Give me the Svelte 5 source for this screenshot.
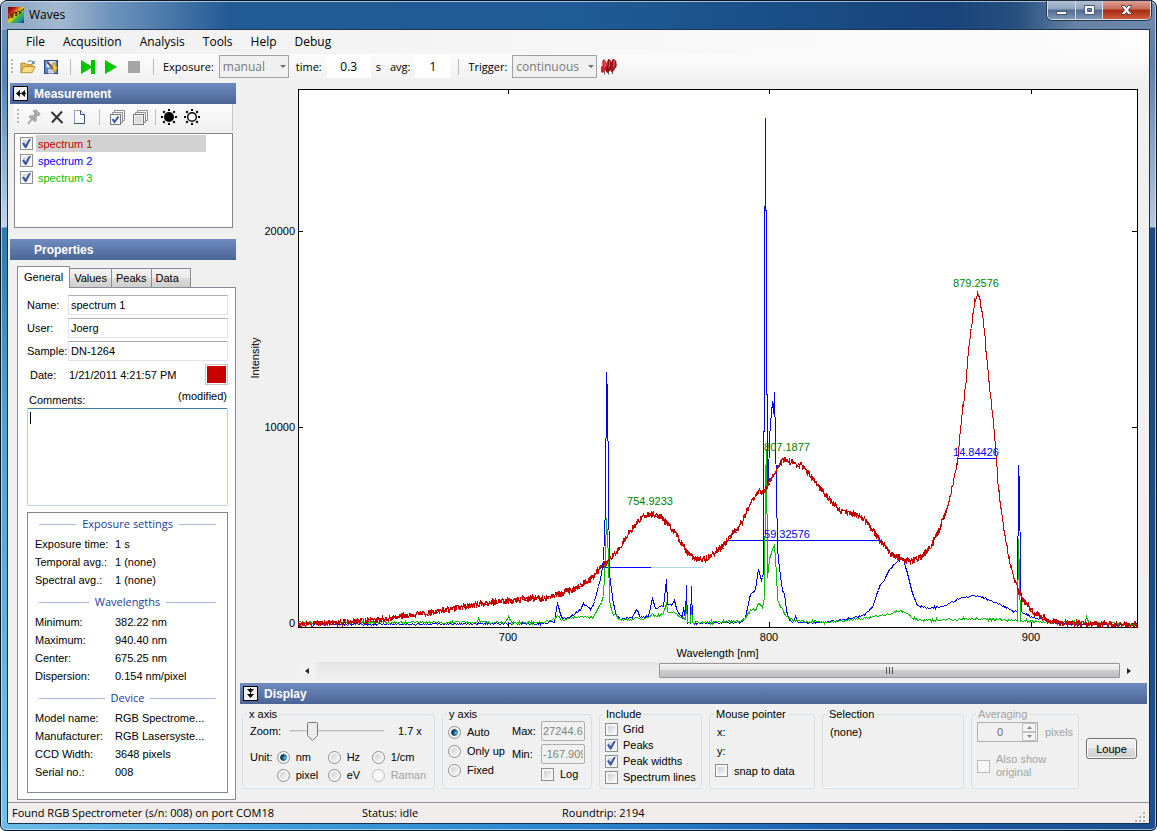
<!-- App.svelte -->
<script>
    // Menus and tabs
    const menus = ['File', 'Acqusition', 'Analysis', 'Tools', 'Help', 'Debug'];
    const tabs = ['General', 'Values', 'Peaks', 'Data'];

    // State
    let activeTab = $state('General');
    let selected = $state(0);
    let comments = $state('');
    let zoom = $state(20);
    let unit = $state('nm');
    let yMode = $state('Auto');
    let spectra = $state([
        { name: 'spectrum 1', color: '#c80000', visible: true },
        { name: 'spectrum 2', color: '#0000ff', visible: true },
        { name: 'spectrum 3', color: '#00c000', visible: true }
    ]);
    let include = $state([
        { label: 'Grid', on: false },
        { label: 'Peaks', on: true },
        { label: 'Peak widths', on: true },
        { label: 'Spectrum lines', on: false }
    ]);

    const units = [
        { label: 'nm' }, { label: 'Hz' }, { label: '1/cm' },
        { label: 'pixel' }, { label: 'eV' }, { label: 'Raman', disabled: true }
    ];

    const info = [
        { title: 'Exposure settings', rows: [
            ['Exposure time:', '1 s'],
            ['Temporal avg.:', '1 (none)'],
            ['Spectral avg.:', '1 (none)']
        ] },
        { title: 'Wavelengths', rows: [
            ['Minimum:', '382.22 nm'],
            ['Maximum:', '940.40 nm'],
            ['Center:', '675.25 nm'],
            ['Dispersion:', '0.154 nm/pixel']
        ] },
        { title: 'Device', rows: [
            ['Model name:', 'RGB Spectrome...'],
            ['Manufacturer:', 'RGB Lasersyste...'],
            ['CCD Width:', '3648 pixels'],
            ['Serial no.:', '008']
        ] }
    ];

    const VIEW = { x0: 298, x1: 1137, y0: 89, y1: 627 };
    const red = [
        [298,624],[340,622],[370,620],[400,616],[430,612],[460,607],[490,602],[520,599],[545,597],[560,594],
        [575,588],[590,579],[600,568],[606,563],[615,553],[625,538],[635,524],[642,517],[652,513],[660,516],
        [668,524],[675,532],[682,545],[688,553],[695,558],[705,559],[715,552],[725,543],[735,530],[742,521],
        [750,503],[757,491],[762,492],[766,488],[770,480],[776,470],[780,462],[785,459],[790,461],[795,465],
        [802,466],[810,475],[820,488],[830,500],[840,510],[850,513],[862,517],[870,526],[880,540],[890,553],
        [900,558],[910,561],[920,557],[930,547],[937,533],[943,518],[948,505],[953,480],[957,460],[960,427],
        [965,387],[968,347],[972,320],[974,302],[977,294],[978,294],[982,312],[985,343],[988,377],[992,413],
        [995,447],[998,487],[1002,520],[1007,550],[1012,573],[1017,588],[1023,600],[1033,612],[1047,619],
        [1060,623],[1137,624]
    ];
    const blue = [
        [298,623],[350,624],[540,623],[554,621],[557,603],[561,617],[567,618],[575,613],[580,609],[583,604],
        [590,608],[593,605],[597,590],[600,578],[603,560],[605,507],[606,372],[607,393],[608,483],[609,573],
        [612,597],[615,613],[620,619],[632,617],[636,609],[640,617],[648,616],[652,598],[655,608],[663,605],
        [666,580],[667,603],[671,605],[674,600],[677,611],[682,617],[683,607],[685,618],[686,584],[687,623],
        [690,623],[691,586],[692,623],[740,622],[745,617],[750,593],[755,590],[758,568],[761,580],[763,573],
        [764,300],[765,119],[766,300],[767,487],[768,480],[769,436],[770,423],[772,400],[773,413],[774,392],
        [776,487],[777,547],[778,560],[782,590],[784,593],[786,610],[789,620],[793,622],[795,616],[797,622],
        [823,622],[840,620],[863,615],[872,607],[880,583],[883,581],[890,568],[900,559],[903,559],[907,573],
        [912,593],[917,605],[928,608],[943,606],[957,599],[973,595],[983,597],[997,603],[1013,611],[1017,611],
        [1018,465],[1019,487],[1020,573],[1021,612],[1033,617],[1043,619],[1057,623],[1137,624]
    ];
    const green = [
        [298,622],[350,622],[355,619],[360,622],[476,622],[478,619],[480,622],[505,622],[508,617],[511,622],
        [540,622],[554,619],[557,615],[561,619],[583,616],[593,617],[598,607],[603,597],[605,553],[606,517],
        [608,557],[609,600],[612,613],[620,619],[632,619],[636,616],[640,619],[648,618],[652,612],[655,616],
        [663,613],[666,602],[667,612],[674,611],[680,617],[685,619],[686,605],[687,622],[690,622],[691,607],
        [692,622],[740,621],[745,618],[750,610],[755,609],[758,602],[762,607],[764,597],[765,480],[766,450],
        [767,577],[769,560],[772,548],[774,545],[776,573],[777,600],[785,615],[793,620],[823,622],[857,619],
        [877,616],[900,610],[905,612],[912,618],[923,620],[977,618],[1013,620],[1017,620],[1018,540],
        [1019,577],[1020,620],[1057,622],[1085,622],[1086,615],[1088,622],[1137,624]
    ];

    const peaks = [
        { x: 650, y: 501, text: '754.9233' },
        { x: 787, y: 447, text: '807.1877' },
        { x: 976, y: 283, text: '879.2576' }
    ];
    const widths = [
        { x0: 651, x1: 703, y: 567, color: '#add8e6' },
        { x0: 602, x1: 651, y: 567, color: '#0000ff' },
        { x0: 726, x1: 882, y: 540, color: '#0000ff', text: '59.32576', mid: 787, ty: 534 },
        { x0: 957, x1: 996, y: 458, color: '#0000ff', text: '14.84426', mid: 976, ty: 452 }
    ];
    const xTicks = [[508, '700'], [769, '800'], [1031, '900']];
    const yTicks = [[231, '20000'], [427, '10000'], [623, '0']];

    // Plot geometry
    let chartW = $state(907);
    let chartH = $state(583);
    const pad = { left: 58, top: 10, right: 10, bottom: 35 };
    let plotW = $derived(chartW - pad.left - pad.right);
    let plotH = $derived(chartH - pad.top - pad.bottom);

    function sx(x) {
        return pad.left + (x - VIEW.x0) / (VIEW.x1 - VIEW.x0) * plotW;
    }

    function sy(y) {
        return pad.top + (y - VIEW.y0) / (VIEW.y1 - VIEW.y0) * plotH;
    }

    // Snap to the middle of a pixel so hairlines stay sharp
    function snap(v) {
        return Math.round(v) + 0.5;
    }

    // Small repeatable generator for the detector noise
    function noise(seed) {
        let s = seed;
        return () => {
            s = (s * 1664525 + 1013904223) % 4294967296;
            return s / 4294967296 - 0.5;
        };
    }

    function resample(points, step, amp, seed) {
        const rnd = noise(seed);
        const out = [];
        let i = 0;
        for (let x = points[0][0]; x <= VIEW.x1; x += step) {
            while (i < points.length - 2 && points[i + 1][0] <= x) i++;
            const [ax, ay] = points[i];
            const [bx, by] = points[i + 1];
            out.push([x, Math.min(ay + (by - ay) * (x - ax) / (bx - ax) + rnd() * amp, 626)]);
        }
        return out;
    }

    const traces = [
        { index: 1, points: resample(blue, 1, 1.8, 7) },
        { index: 2, points: resample(green, 1, 2.4, 21) },
        { index: 0, points: resample(red, 0.5, 6, 3) }
    ];

    function toPath(points) {
        return 'M' + points.map(([x, y]) => (sx(x) + 0.5).toFixed(1) + ' ' + snap(sy(y))).join('L');
    }
</script>

{#snippet check(label, on, disabled = false)}
    <label class="option" class:disabled>
        <input type="checkbox" checked={on} {disabled} />
        <span>{label}</span>
    </label>
{/snippet}

{#snippet stack()}
    <path d="M5.5 3.5V1.5H15.5V11.5H13.5" fill="none" stroke="#8d8f91" />
    <path d="M3.5 5.5V3.5H13.5V13.5H11.5" fill="none" stroke="#8d8f91" />
    <rect x="1.5" y="5.5" width="10" height="10" fill="#f4f5f7" stroke="#77797c" />
{/snippet}

{#snippet rays()}
    <path d="M8 0V2M8 14V16M0 8H2M14 8H16M2.2 2.2L3.8 3.8M12.2 12.2L13.8 13.8M13.8 2.2L12.2 3.8M3.8 12.2L2.2 13.8" stroke="#000" stroke-width="2" />
{/snippet}

<div class="window">
    <header class="titlebar">
        <svg class="app-icon" width="16" height="16" viewBox="0 0 16 16">
            <defs>
                <linearGradient id="rainbow" x1="0" y1="0" x2="1" y2="1">
                    <stop offset="0" stop-color="#5a0608" />
                    <stop offset=".25" stop-color="#c41c12" />
                    <stop offset=".48" stop-color="#f0d020" />
                    <stop offset=".62" stop-color="#45b838" />
                    <stop offset=".8" stop-color="#1a9aa0" />
                    <stop offset="1" stop-color="#1c2a78" />
                </linearGradient>
            </defs>
            <rect width="16" height="16" fill="url(#rainbow)" />
            <path d="M0 11C2 11 2 7 4 7C6 7 5 11 4 11C3 11 4 6 7 5.500C10 5 9 9 8 9C7 9 8 5 10 4.500C13 3 13 6.500 12 7C10.500 7 12 3 16 2" fill="none" stroke="#301010" />
        </svg>
        <h1>Waves</h1>
        <div class="window-buttons">
            <button class="min" aria-label="Minimize">
                <svg width="13" height="12" viewBox="0 0 13 12"><rect x="1.5" y="7.500" width="10" height="3" fill="#fff" stroke="#4b5a70" /></svg>
            </button>
            <button class="max" aria-label="Maximize">
                <svg width="13" height="12" viewBox="0 0 13 12"><path d="M1.500 1.500H11.500V10.500H1.500ZM4.500 4.500V7.500H8.500V4.500Z" fill="#fff" fill-rule="evenodd" stroke="#4b5a70" /></svg>
            </button>
            <button class="close" aria-label="Close">
                <svg width="13" height="12" viewBox="0 0 13 12"><path d="M1.500 1.500H4.500L6.500 3.500L8.500 1.500H11.500V2.500L8.500 6L11.500 9.500V10.500H8.500L6.500 8.500L4.500 10.500H1.500V9.500L4.500 6L1.500 2.500Z" fill="#fff" stroke="#53343a" /></svg>
            </button>
        </div>
    </header>

    <div class="client">
        <nav class="menubar">
            {#each menus as menu}
                <button>{menu}</button>
            {/each}
        </nav>

        <div class="toolbar">
            <span class="grip"></span>
            <button class="tool" aria-label="Open">
                <svg width="17" height="16" viewBox="0 0 17 16">
                    <path d="M1 14V4H6L7.500 5.500H13V8" fill="#e9bd54" stroke="#b0832c" />
                    <path d="M1 14L4 7.500H16L13 14Z" fill="#fbdc86" stroke="#b98c34" />
                    <path d="M8 3C9.500 1 12 .8 14 2.800" fill="none" stroke="#4f6a8c" />
                    <path d="M15.500 1V4.500H12Z" fill="#4f6a8c" />
                </svg>
            </button>
            <button class="tool save" aria-label="Save">
                <svg width="16" height="16" viewBox="0 0 16 16">
                    <rect x="1.500" y="1.500" width="13" height="13" fill="#5580cc" stroke="#2c4a86" />
                    <rect x="3.500" y="2" width="9" height="6.500" fill="#e9eef6" />
                    <rect x="5" y="10" width="6" height="4.500" fill="#c6cfdd" />
                    <path d="M4 2.500L12 12" stroke="#5a5a62" stroke-width="2" />
                    <path d="M9 5L11 3L14.500 9L12 14L10 11Z" fill="#f0c040" stroke="#a17c22" stroke-width=".6" />
                </svg>
            </button>
            <span class="separator"></span>
            <button class="tool" aria-label="Single acquisition">
                <svg width="16" height="16" viewBox="0 0 16 16"><path d="M1 1L11 7V1H15V15H11V9L1 15Z" fill="#00c400" /></svg>
            </button>
            <button class="tool play" aria-label="Start">
                <svg width="16" height="16" viewBox="0 0 16 16"><path d="M2 1L14 8L2 15Z" fill="#00c400" /></svg>
            </button>
            <button class="tool play" aria-label="Stop">
                <svg width="16" height="16" viewBox="0 0 16 16"><rect x="2" y="2" width="12" height="12" fill="#a5a5a5" /></svg>
            </button>
            <span class="separator"></span>
            <label class="field" for="exposure">Exposure:</label>
            <span class="combo manual">
                <select id="exposure" disabled><option>manual</option></select>
            </span>
            <label class="field" for="time">time:</label>
            <input id="time" class="time" value="0.3" />
            <span class="field seconds">s</span>
            <label class="field" for="avg">avg:</label>
            <input id="avg" class="avg" value="1" />
            <span class="separator"></span>
            <label class="field" for="trigger">Trigger:</label>
            <span class="combo continuous">
                <select id="trigger" disabled><option>continuous</option></select>
            </span>
            <button class="tool" aria-label="Trigger settings">
                <svg width="16" height="16" viewBox="0 0 16 16">
                    <path d="M3.500 11V15.500M7.500 11V15.500M11.500 11V15" stroke="#555" />
                    <path d="M4.500 2C2 4 6 6 3.500 8C1.500 9 1.500 11 3 12.500" fill="none" stroke="#d4202a" stroke-width="5" />
                    <path d="M9.500 1.500C7 4 11 6 8.500 8C6.500 9 6.500 11 8 12.500" fill="none" stroke="#8e0f16" stroke-width="5" />
                    <path d="M14 1C11 4 15.500 6 12.500 8C11 9 11 11 12.500 12" fill="none" stroke="#a3141c" stroke-width="4.500" />
                    <path d="M4 2.500C3 4 5.500 6 3.500 8.500M9 2C7.500 4 10 6 7.500 8.500M13.500 1.500C12 4 14 6 12 8" fill="none" stroke="#f07a80" />
                </svg>
            </button>
        </div>

        <div class="body">
            <aside>
                <h2 class="section-bar">
                    <button aria-label="Collapse measurement">
                        <svg width="13" height="13" viewBox="0 0 13 13"><path d="M6 3V10L2 6.500ZM11 3V10L7 6.500Z" /><path d="M5 6.500H7M10 6.500H12" stroke="#000" /></svg>
                    </button>
                    Measurement
                </h2>

                <div class="list-tools">
                    <span class="grip"></span>
                    <button class="tool" aria-label="Pin">
                        <svg width="16" height="16" viewBox="0 0 16 16">
                            <path d="M6.500 1.500L10 .5L14.500 4.500L13.500 7L11.500 7L10.500 9C11.500 11 10.500 13 8.500 13L2.500 8C3.500 6 5.500 6 7 6.500L8.500 4.500Z" fill="#a9a9a9" />
                            <path d="M6 10L2 15" stroke="#a9a9a9" stroke-width="2" />
                        </svg>
                    </button>
                    <button class="tool" aria-label="Delete">
                        <svg width="16" height="16" viewBox="0 0 16 16"><path d="M2.500 3L13.500 14M13 2.500L3 13.500" stroke="#333" stroke-width="2" /></svg>
                    </button>
                    <button class="tool" aria-label="New">
                        <svg width="16" height="16" viewBox="0 0 16 16">
                            <path d="M2.500 1.500H8.500L12.500 5.500V14.500H2.500Z" fill="#fff" stroke="#8ea4c2" />
                            <path d="M8.500 1.500V5.500H12.500V14.500H2" fill="none" stroke="#34507c" />
                        </svg>
                    </button>
                    <span class="separator"></span>
                    <button class="tool" aria-label="Check all">
                        <svg width="16" height="16" viewBox="0 0 16 16">
                            {@render stack()}
                            <path d="M3.500 10L5.500 13L9.500 7.500" fill="none" stroke="#3b57a6" stroke-width="2" />
                        </svg>
                    </button>
                    <button class="tool" aria-label="Uncheck all">
                        <svg width="16" height="16" viewBox="0 0 16 16">
                            {@render stack()}
                            <rect x="3" y="7" width="7" height="7" fill="#dcdddf" />
                        </svg>
                    </button>
                    <span class="separator tight"></span>
                    <button class="tool" aria-label="Dark spectrum">
                        <svg width="16" height="16" viewBox="0 0 16 16">{@render rays()}<circle cx="8" cy="8" r="5" /></svg>
                    </button>
                    <button class="tool" aria-label="Reference spectrum">
                        <svg width="16" height="16" viewBox="0 0 16 16">{@render rays()}<circle cx="8" cy="8" r="4.300" fill="#fff" stroke="#000" stroke-width="1.400" /></svg>
                    </button>
                </div>

                <ul class="spectra">
                    {#each spectra as spectrum, i}
                        <li>
                            <input type="checkbox" bind:checked={spectrum.visible} aria-label={spectrum.name} />
                            <button
                                class:selected={selected === i}
                                style="color: {spectrum.color}"
                                onclick={() => selected = i}
                            >{spectrum.name}</button>
                        </li>
                    {/each}
                </ul>

                <h2 class="section-bar plain">Properties</h2>

                <div class="tabs" role="tablist">
                    {#each tabs as tab}
                        <button
                            role="tab"
                            aria-selected={activeTab === tab}
                            class:active={activeTab === tab}
                            onclick={() => activeTab = tab}
                        >{tab}</button>
                    {/each}
                </div>

                <div class="tab-page">
                    <div class="properties">
                        <label for="name">Name:</label>
                        <input id="name" value="spectrum 1" />
                        <label for="user">User:</label>
                        <input id="user" value="Joerg" />
                        <label for="sample">Sample:</label>
                        <input id="sample" value="DN-1264" />
                    </div>
                    <div class="date">
                        <span class="caption">Date:</span>
                        <span>1/21/2011 4:21:57 PM</span>
                        <button class="swatch" aria-label="Spectrum color"></button>
                    </div>
                    <div class="comments-head">
                        <label for="comments">Comments:</label>
                        <span>(modified)</span>
                    </div>
                    <div class="comments">
                        <textarea id="comments" bind:value={comments}></textarea>
                        {#if !comments}<span class="caret"></span>{/if}
                    </div>

                    <div class="info">
                        {#each info as group}
                            <h3>{group.title}</h3>
                            <dl>
                                {#each group.rows as [key, value]}
                                    <dt>{key}</dt>
                                    <dd>{value}</dd>
                                {/each}
                            </dl>
                        {/each}
                    </div>
                </div>
            </aside>

            <main>
                <div class="chart" bind:clientWidth={chartW} bind:clientHeight={chartH}>
                    <svg width={chartW} height={chartH}>
                        <g shape-rendering="crispEdges" fill="none">
                            <rect x={pad.left + 0.5} y={pad.top + 0.5} width={plotW} height={plotH} fill="#fff" stroke="#000" />
                            {#each xTicks as [x]}
                                <path d="M{snap(sx(x))} {pad.top}v5M{snap(sx(x))} {pad.top + plotH}v-5" stroke="#000" />
                            {/each}
                            {#each yTicks as [y]}
                                <path d="M{pad.left} {snap(sy(y))}h5M{pad.left + plotW} {snap(sy(y))}h-5" stroke="#000" />
                            {/each}
                            {#each widths as w}
                                <path d="M{sx(w.x0)} {snap(sy(w.y))}H{sx(w.x1)}" stroke={w.color} />
                            {/each}
                            {#each traces as trace}
                                {#if spectra[trace.index].visible}
                                    <path d={toPath(trace.points)} stroke={spectra[trace.index].color} />
                                {/if}
                            {/each}
                        </g>
                        {#each xTicks as [x, text]}
                            <text x={sx(x)} y={pad.top + plotH + 14} text-anchor="middle">{text}</text>
                        {/each}
                        {#each yTicks as [y, text]}
                            <text x={pad.left - 3} y={sy(y) + 4} text-anchor="end">{text}</text>
                        {/each}
                        <text x={pad.left + plotW / 2} y={pad.top + plotH + 30} text-anchor="middle">Wavelength [nm]</text>
                        <text transform="translate(19 {pad.top + plotH / 2}) rotate(-90)" text-anchor="middle">Intensity</text>
                        {#each peaks as peak}
                            <text class="peak" x={sx(peak.x)} y={sy(peak.y) + 4} text-anchor="middle">{peak.text}</text>
                        {/each}
                        {#each widths as w}
                            {#if w.text}
                                <text class="width" x={sx(w.mid)} y={sy(w.ty) + 4} text-anchor="middle">{w.text}</text>
                            {/if}
                        {/each}
                    </svg>
                </div>

                <div class="scrollbar">
                    <button aria-label="Scroll left"><svg width="4" height="6" viewBox="0 0 4 6"><path d="M4 0V6L0 3Z" fill="#222" /></svg></button>
                    <div class="track"><div class="thumb"><i></i><i></i><i></i></div></div>
                    <button aria-label="Scroll right"><svg width="4" height="6" viewBox="0 0 4 6"><path d="M0 0V6L4 3Z" fill="#222" /></svg></button>
                </div>

                <h2 class="section-bar">
                    <button aria-label="Collapse display">
                        <svg width="13" height="13" viewBox="0 0 13 13"><path d="M3 2H10L6.500 6ZM3 7H10L6.500 11Z" /><path d="M6.500 1V3M6.500 6V8" stroke="#000" /></svg>
                    </button>
                    Display
                </h2>

                <div class="display">
                    <fieldset class="x-axis">
                        <legend>x axis</legend>
                        <div class="zoom">
                            <label for="zoom">Zoom:</label>
                            <input id="zoom" type="range" min="0" max="100" bind:value={zoom} />
                            <span>1.7 x</span>
                        </div>
                        <div class="unit">
                            <span>Unit:</span>
                            <div class="unit-grid">
                                {#each units as u}
                                    <label class="option" class:disabled={u.disabled}>
                                        <input type="radio" name="unit" value={u.label} bind:group={unit} disabled={u.disabled} />
                                        <span>{u.label}</span>
                                    </label>
                                {/each}
                            </div>
                        </div>
                    </fieldset>

                    <fieldset class="y-axis">
                        <legend>y axis</legend>
                        <div class="modes">
                            {#each ['Auto', 'Only up', 'Fixed'] as mode}
                                <label class="option">
                                    <input type="radio" name="ymode" value={mode} bind:group={yMode} />
                                    <span>{mode}</span>
                                </label>
                            {/each}
                        </div>
                        <div class="range">
                            <label for="ymax">Max:</label>
                            <input id="ymax" value="27244.6" disabled />
                            <label for="ymin">Min:</label>
                            <input id="ymin" value="-167.909" disabled />
                            <span></span>
                            {@render check('Log', false)}
                        </div>
                    </fieldset>

                    <fieldset class="include">
                        <legend>Include</legend>
                        {#each include as item}
                            <label class="option">
                                <input type="checkbox" bind:checked={item.on} />
                                <span>{item.label}</span>
                            </label>
                        {/each}
                    </fieldset>

                    <fieldset class="pointer">
                        <legend>Mouse pointer</legend>
                        <p>x:</p>
                        <p>y:</p>
                        {@render check('snap to data', false)}
                    </fieldset>

                    <fieldset class="selection">
                        <legend>Selection</legend>
                        <p>(none)</p>
                    </fieldset>

                    <fieldset class="averaging" disabled>
                        <legend>Averaging</legend>
                        <div class="spin-row">
                            <span class="spin">
                                <input id="pixels" value="0" />
                                <span class="arrows">
                                    <button aria-label="Increase"><svg width="5" height="3" viewBox="0 0 5 3"><path d="M0 3L2.500 0L5 3Z" fill="#888" /></svg></button>
                                    <button aria-label="Decrease"><svg width="5" height="3" viewBox="0 0 5 3"><path d="M0 0L2.500 3L5 0Z" fill="#888" /></svg></button>
                                </span>
                            </span>
                            <label for="pixels">pixels</label>
                        </div>
                        {@render check('Also show original', false, true)}
                    </fieldset>

                    <button class="loupe">Loupe</button>
                </div>
            </main>
        </div>

        <footer>
            <span>Found RGB Spectrometer (s/n: 008) on port COM18</span>
            <span>Status: idle</span>
            <span>Roundtrip: 2194</span>
            <svg width="11" height="11" viewBox="0 0 11 11"><path d="M8 0h2v2h-2zM4 4h2v2h-2zM8 4h2v2h-2zM0 8h2v2h-2zM4 8h2v2h-2zM8 8h2v2h-2z" fill="#b5b0b0" /></svg>
        </footer>
    </div>
</div>

<style>
    :global(body) {
        background: #fff;
    }

    .window {
        box-sizing: border-box;
        min-height: 100vh;
        display: flex;
        flex-direction: column;
        padding: 0 7px 7px 7px;
        border: 1px solid #0a1526;
        border-radius: 7px 7px 6px 6px;
        box-shadow: inset 0 0 0 1px rgba(220, 236, 250, 0.7);
        background:
            linear-gradient(90deg, #8ba6c4 0, #a3b8cf 60px, #6d93bc 110px, #225a95 230px, #1f5b96 50%, #17437a 82%, #27507f 88%, #6682a6 93%, #6d88a9 100%) top / 100% 29px no-repeat,
            linear-gradient(90deg, #6cbbe8 0, #3d9bd8 25%, #2a84cc 50%, #1b5ba8 75%, #1a4f8d 100%) bottom / 100% 8px no-repeat,
            linear-gradient(180deg, #6f92b8 0, #5486ba 80px, #c2d5ea 226px, #2a7ab5 227px, #4f9fd0 400px, #72c1ec 100%) left / 8px 100% no-repeat,
            linear-gradient(180deg, #6d88a9 0, #5f7fa5 60px, #b6c9de 226px, #184a84 227px, #1a5290 100%) right / 8px 100% no-repeat;
        font: 11px/14px "Liberation Sans", Arial, sans-serif;
        color: #000;
    }

    button, input, select, textarea {
        font: inherit;
        color: inherit;
        margin: 0;
        padding: 0;
        box-sizing: border-box;
    }

    .titlebar {
        height: 28px;
        display: flex;
        align-items: center;
        margin-right: -2px;
    }

    .titlebar h1 {
        margin: 0;
        padding: 0 8px 0 5px;
        font: 12px/16px "Open Sans", sans-serif;
        flex: 1;
    }

    .window-buttons {
        display: flex;
        align-self: flex-start;
        border: 1px solid #d5dfea;
        border-top: 0;
        border-radius: 0 0 5px 5px;
        overflow: hidden;
        box-shadow: 0 0 0 1px #26344a;
    }

    .window-buttons button {
        height: 18px;
        display: flex;
        align-items: center;
        justify-content: center;
        border: 0;
        border-right: 1px solid #d5dfea;
        background: linear-gradient(#b3c2d4 0, #8fa3bc 45%, #4f6d92 50%, #7d97b5 100%);
    }

    .window-buttons .min {
        width: 28px;
    }

    .window-buttons .max {
        width: 27px;
    }

    .window-buttons .close {
        width: 47px;
        border-right: 0;
        background: linear-gradient(#dca195 0, #c86c5a 45%, #a82a12 50%, #cf5a3c 100%);
    }

    .client {
        flex: 1;
        display: flex;
        flex-direction: column;
        background: #f0f0f0;
        border-top: 1px solid #1f3552;
        box-shadow: -1px 0 0 #16324e, 1px 0 0 #16324e, 0 1px 0 #16324e;
    }

    .menubar {
        height: 24px;
        display: flex;
        align-items: center;
        padding-left: 9px;
        background: linear-gradient(90deg, #f0f0f0, #fdfdfd);
    }

    .menubar button {
        border: 0;
        background: none;
        padding: 0 9px;
        font: 12px/18px "Open Sans", sans-serif;
    }

    .toolbar {
        height: 25px;
        display: flex;
        align-items: center;
        background: linear-gradient(#fcfcfc, #f1f1f1);
        font: 12px/16px "Open Sans", sans-serif;
    }

    .grip {
        width: 2px;
        height: 15px;
        margin: 0 7px 0 3px;
        background: repeating-linear-gradient(#b8b8b8 0 2px, transparent 2px 4px);
    }

    .tool {
        width: 16px;
        height: 16px;
        margin-right: 7px;
        border: 0;
        background: none;
        display: flex;
        align-items: center;
        justify-content: center;
        flex: none;
    }

    .separator {
        width: 1px;
        height: 16px;
        margin: 0 9px 0 4px;
        background: #bdbdbd;
    }

    .separator.tight {
        margin: 0 5px 0 0;
    }

    .field {
        margin-right: 5px;
        font-size: 11px;
    }

    .seconds {
        margin-right: 9px;
    }

    .combo {
        position: relative;
        margin-right: 7px;
    }

    .combo::after {
        content: "";
        position: absolute;
        right: 3px;
        top: 10px;
        border: 3px solid transparent;
        border-top-color: #6d6d6d;
        border-bottom: 0;
    }

    .combo select {
        display: block;
        width: 100%;
        height: 23px;
        padding: 0 3px;
        appearance: none;
        border: 1px solid #a0a0a0;
        border-radius: 0;
        background: #f0f0f0;
        color: #7a7a7a;
        opacity: 1;
    }

    .manual {
        width: 70px;
    }

    .continuous {
        width: 85px;
        margin-right: 4px;
    }

    .toolbar input {
        height: 23px;
        border: 0;
        background: #fff;
        text-align: center;
    }

    .time {
        width: 44px;
        margin-right: 5px;
    }

    .avg {
        width: 35px;
        margin-right: 4px;
    }

    .body {
        flex: 1;
        display: flex;
        padding: 0 2px;
        gap: 4px;
    }

    aside {
        width: 226px;
        flex: none;
        display: flex;
        flex-direction: column;
        padding-top: 4px;
    }

    main {
        flex: 1;
        min-width: 0;
        display: flex;
        flex-direction: column;
    }

    .section-bar {
        flex: none;
        height: 21px;
        margin: 0;
        padding-left: 3px;
        display: flex;
        align-items: center;
        gap: 6px;
        background: linear-gradient(#6f8cc0, #4a6494);
        color: #fff;
        font: bold 12px/16px "Liberation Sans", Arial, sans-serif;
    }

    .section-bar button {
        width: 15px;
        height: 15px;
        border: 1px solid #000;
        background: #f0f0f0;
        display: flex;
        align-items: center;
        justify-content: center;
    }

    .section-bar.plain {
        padding-left: 24px;
    }

    .list-tools {
        height: 27px;
        box-sizing: border-box;
        margin: 0 3px 0 4px;
        padding-bottom: 2px;
        display: flex;
        align-items: center;
        background: linear-gradient(#fbfbfb, #f0f0f0);
        border-right: 1px solid #c8c8c8;
    }

    .spectra {
        height: 95px;
        box-sizing: border-box;
        margin: 2px 3px 11px 4px;
        padding: 1px 0 0 5px;
        border: 1px solid #828790;
        background: #fff;
        list-style: none;
    }

    .spectra li {
        height: 17px;
        display: flex;
        align-items: center;
        gap: 3px;
        padding-right: 26px;
    }

    .spectra button {
        flex: 1;
        height: 17px;
        border: 0;
        padding-left: 2px;
        background: none;
        text-align: left;
    }

    .spectra .selected {
        background: #d2d2d2;
    }

    input[type="checkbox"],
    input[type="radio"] {
        appearance: none;
        flex: none;
        width: 13px;
        height: 13px;
        border: 1px solid #8e8f8f;
        background: linear-gradient(135deg, #cbcfd5, #f6f6f6) content-box, #f6f6f6;
        padding: 2px;
        position: relative;
    }

    input[type="radio"] {
        border-radius: 50%;
    }

    input[type="checkbox"]:checked::after {
        content: "";
        position: absolute;
        left: 1px;
        top: 1px;
        width: 9px;
        height: 9px;
        background: #3b54a0;
        clip-path: polygon(0 50%, 22% 40%, 40% 65%, 78% 0, 100% 0, 48% 100%, 34% 100%);
    }

    input[type="radio"]:checked {
        background: radial-gradient(circle at 5px 4px, #7fd0f2 0, #1b6a9c 2px, #0d2f4a 4px) content-box, #f6f6f6;
    }

    input[type="radio"]:checked::before {
        content: "";
        position: absolute;
        inset: 1px;
        border: 1px solid #e4e8ec;
        border-radius: 50%;
    }

    input[type="checkbox"]:disabled,
    input[type="radio"]:disabled {
        border-color: #bcbcbc;
        background: #f7f7f7;
    }

    .tabs {
        display: flex;
        align-items: flex-end;
        margin: 6px 0 0 7px;
    }

    .tabs button {
        height: 19px;
        padding: 0 4px;
        border: 1px solid #898c95;
        border-left-width: 0;
        border-bottom: 0;
        background: linear-gradient(#f2f2f2 0, #ebebeb 50%, #dddddd 50%, #cfcfcf 100%);
    }

    .tabs .active {
        height: 22px;
        margin-bottom: -1px;
        padding: 0 6px 2px;
        border-left-width: 1px;
        background: #fff;
        position: relative;
    }

    .tabs button:last-child {
        padding-right: 11px;
    }

    .tab-page {
        flex: 1;
        margin: 0 0 2px 7px;
        padding: 7px 7px 6px 9px;
        border: 1px solid #898c95;
        background: #fff;
        display: flex;
        flex-direction: column;
    }

    .properties {
        display: grid;
        grid-template-columns: 41px 1fr;
        row-gap: 3px;
        align-items: center;
    }

    .properties input {
        width: 100%;
        height: 20px;
        padding: 0 2px;
        border: 1px solid #e2e3ea;
        border-top-color: #abadb3;
        border-radius: 1px;
        background: #fff;
    }

    .date {
        display: flex;
        align-items: center;
        padding: 3px 0 0 3px;
    }

    .date .caption {
        width: 39px;
    }

    .swatch {
        width: 23px;
        height: 21px;
        margin-left: auto;
        border: 1px solid #c8c8c8;
        background: #c80000 content-box;
        padding: 1px;
    }

    .comments-head {
        display: flex;
        justify-content: space-between;
        padding: 4px 1px 1px 2px;
    }

    .comments-head label {
        padding-top: 4px;
    }

    .comments {
        position: relative;
        display: flex;
    }

    .comments textarea {
        flex: 1;
        height: 98px;
        padding: 2px;
        border: 1px solid #b5cfe7;
        border-top-color: #3d7bad;
        border-radius: 2px;
        resize: none;
        outline: 0;
    }

    .caret {
        position: absolute;
        left: 3px;
        top: 4px;
        width: 1px;
        height: 12px;
        background: #000;
    }

    .info {
        flex: 1;
        margin-top: 6px;
        padding: 2px 7px 0;
        border: 1px solid #828790;
    }

    .info h3 {
        margin: 0 4px;
        display: flex;
        align-items: center;
        gap: 6px;
        height: 18px;
        color: #1c3c9c;
        font: 11px/18px "Open Sans", sans-serif;
    }

    .info h3::before,
    .info h3::after {
        content: "";
        flex: 1;
        height: 1px;
        background: #a9bbdc;
    }

    .info dl {
        margin: 2px 0 4px;
        display: grid;
        grid-template-columns: 80px 1fr;
        line-height: 18px;
    }

    .info dd {
        margin: 0;
        white-space: nowrap;
    }

    .chart {
        flex: 1;
        min-height: 0;
        overflow: hidden;
    }

    .chart svg {
        display: block;
    }

    .chart .peak {
        fill: #008000;
    }

    .chart .width {
        fill: #0000ff;
    }

    .scrollbar {
        flex: none;
        height: 17px;
        margin: 0 9px 4px 58px;
        display: flex;
        background: linear-gradient(#e6e6e6, #efefef);
    }

    .scrollbar button {
        width: 18px;
        border: 0;
        background: #f1f1f1;
        display: flex;
        align-items: center;
        justify-content: center;
    }

    .track {
        flex: 1;
        display: flex;
        justify-content: flex-end;
        padding: 1px 0;
    }

    .thumb {
        width: 57.3%;
        box-sizing: border-box;
        border: 1px solid #979797;
        border-radius: 1px;
        background: linear-gradient(#f3f3f3 0, #e4e4e4 48%, #cbcbcd 50%, #c1c1c4 100%);
        display: flex;
        align-items: center;
        justify-content: center;
        gap: 2px;
    }

    .thumb i {
        width: 1px;
        height: 7px;
        background: #555;
    }

    .display {
        display: grid;
        grid-template-columns: 193px 150px 103px 106px minmax(142px, 1fr) 108px 51px;
        column-gap: 7px;
        padding: 3px 10px 13px 2px;
    }

    fieldset {
        margin: 0;
        padding: 0 5px;
        min-width: 0;
        height: 82px;
        box-sizing: border-box;
        border: 1px solid #d5dfe5;
        border-radius: 4px;
        box-shadow: inset 0 -1px 0 #fafafa;
    }

    legend {
        height: 14px;
        padding: 0 2px;
        margin-left: -1px;
    }

    .option {
        display: flex;
        align-items: center;
        gap: 6px;
        white-space: nowrap;
    }

    .disabled {
        color: #a3a3a3;
    }

    .zoom {
        display: flex;
        align-items: center;
        height: 20px;
        padding-left: 2px;
    }

    .zoom label {
        width: 40px;
    }

    .zoom input {
        appearance: none;
        width: 94px;
        height: 20px;
        margin-right: 14px;
        background: linear-gradient(#b0b0b0, #e7eaea) center / 100% 2px no-repeat;
    }

    .zoom input::-webkit-slider-thumb {
        appearance: none;
        width: 11px;
        height: 19px;
        background: url("data:image/svg+xml,%3Csvg xmlns='http://www.w3.org/2000/svg' width='11' height='19'%3E%3Cpath d='M.5 1.500Q.5.500 1.500.500H9.500Q10.500.500 10.500 1.500V13.500L5.500 18.500L.5 13.500Z' fill='%23ebebeb' stroke='%23777'/%3E%3C/svg%3E") no-repeat;
    }

    .unit {
        display: flex;
        padding: 7px 0 0 2px;
        line-height: 18px;
    }

    .unit-grid {
        display: grid;
        grid-template-columns: 51px 44px 1fr;
        margin-left: 4px;
    }

    .y-axis > .modes,
    .y-axis > .range {
        float: left;
    }

    .modes {
        width: 64px;
        line-height: 19px;
        padding-top: 2px;
    }

    .range {
        display: grid;
        grid-template-columns: 29px 44px;
        align-items: center;
        row-gap: 3px;
    }

    .range input:not([type]) {
        width: 44px;
        height: 20px;
        padding: 0 1px;
        border: 1px solid #afafaf;
        border-radius: 2px;
        background: #f0f0f0;
        color: #838383;
    }

    .include .option {
        height: 16px;
        gap: 5px;
    }

    fieldset p {
        margin: 0;
        line-height: 19px;
        padding: 2px 0 0 2px;
    }

    .pointer p + p {
        padding-top: 0;
    }

    .pointer .option {
        height: 19px;
    }

    .averaging {
        color: #a3a3a3;
    }

    .spin-row {
        display: flex;
        align-items: center;
        gap: 7px;
        padding-top: 1px;
    }

    .spin {
        width: 61px;
        height: 20px;
        box-sizing: border-box;
        display: flex;
        border: 1px solid #afafaf;
        color: #6d6d6d;
    }

    .spin input {
        flex: 1;
        min-width: 0;
        border: 0;
        background: #f0f0f0;
        text-align: center;
    }

    .arrows {
        width: 14px;
        display: flex;
        flex-direction: column;
        margin-right: 1px;
    }

    .arrows button {
        flex: 1;
        border: 1px solid #c4c4c4;
        background: #f4f4f4;
        display: flex;
        align-items: center;
        justify-content: center;
    }

    .averaging .option {
        margin-top: 11px;
        line-height: 13px;
        white-space: normal;
    }

    .loupe {
        height: 21px;
        margin-top: 31px;
        border: 1px solid #707070;
        border-radius: 3px;
        background: linear-gradient(#f2f2f2 0, #ebebeb 48%, #dddddd 50%, #cfcfcf 100%);
        box-shadow: inset 0 0 0 1px #fbfbfb;
    }

    footer {
        height: 20px;
        display: grid;
        grid-template-columns: 350px 200px 1fr auto;
        align-items: center;
        padding: 0 3px 0 4px;
        border-top: 1px solid #8f9393;
        background: #f1eded;
        font: 11px/18px "Open Sans", sans-serif;
    }

    footer svg {
        align-self: end;
    }
</style>
